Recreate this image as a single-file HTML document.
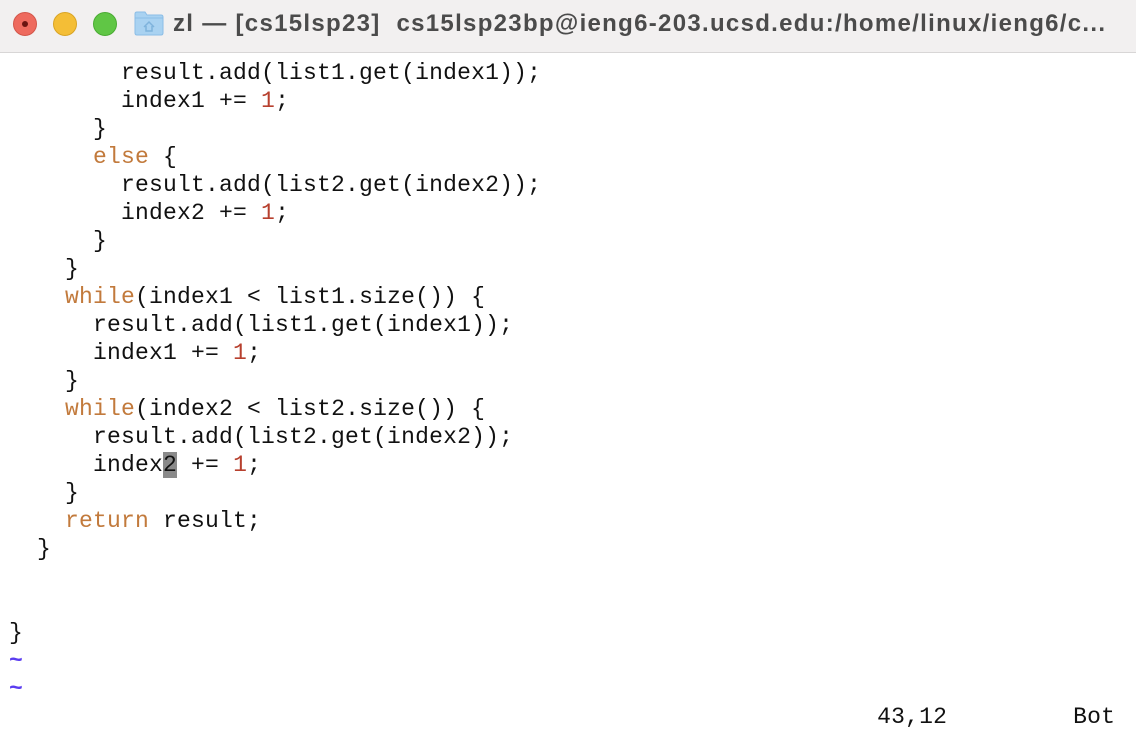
<!DOCTYPE html>
<html><head><meta charset="utf-8"><style>
html,body{margin:0;padding:0;width:1136px;height:738px;overflow:hidden;background:#fff}
.tb{position:absolute;left:0;top:0;width:1136px;height:52px;background:#f2f0f0;border-bottom:1px solid #d8d6d6}
.dot{position:absolute;top:12px;width:24px;height:24px;border-radius:50%;box-sizing:border-box}
.title{position:absolute;left:173px;top:10px;font:bold 24px "Liberation Sans",sans-serif;color:#4b4b4b;white-space:nowrap;letter-spacing:1.3px;line-height:28px}
pre{position:absolute;left:9px;top:59px;margin:0;font:23px/28px "Liberation Mono",monospace;letter-spacing:0.2px;color:#111}
.k{color:#c27a3c}.n{color:#b7402e}.t{color:#5a3cf0;font-weight:bold}.c{background:#8a8a8a}
</style></head><body>
<div class="tb">
<div class="dot" style="left:13px;background:#ee6a5e;border:1px solid #d3564a"><div style="position:absolute;left:8px;top:8px;width:6px;height:6px;border-radius:50%;background:#6b1410"></div></div>
<div class="dot" style="left:53px;background:#f4be36;border:1px solid #d9a424"></div>
<div class="dot" style="left:93px;background:#60c645;border:1px solid #4aab33"></div>
<svg style="position:absolute;left:134px;top:10px" width="30" height="26" viewBox="0 0 30 26"><path d="M1 4 Q1 2 3 2 H11 L13 5 H27 Q29 5 29 7 V23 Q29 25 27 25 H3 Q1 25 1 23Z" fill="#a9d2f1" stroke="#8bbde6"/><path d="M1 8 H29" stroke="#8bbde6"/><path d="M10 17 L15 12 L20 17 M12 16 V21 H18 V16" fill="none" stroke="#7fb3dc" stroke-width="1.5"/></svg>
<div class="title">zl — [cs15lsp23]&nbsp; cs15lsp23bp@ieng6-203.ucsd.edu:/home/linux/ieng6/c...</div>
</div>
<pre>        result.add(list1.get(index1));
        index1 += <span class="n">1</span>;
      }
      <span class="k">else</span> {
        result.add(list2.get(index2));
        index2 += <span class="n">1</span>;
      }
    }
    <span class="k">while</span>(index1 &lt; list1.size()) {
      result.add(list1.get(index1));
      index1 += <span class="n">1</span>;
    }
    <span class="k">while</span>(index2 &lt; list2.size()) {
      result.add(list2.get(index2));
      index<span class="c">2</span> += <span class="n">1</span>;
    }
    <span class="k">return</span> result;
  }


}
<span class="t">~</span>
<span class="t">~</span>
                                                              43,12         Bot</pre>
</body></html>
